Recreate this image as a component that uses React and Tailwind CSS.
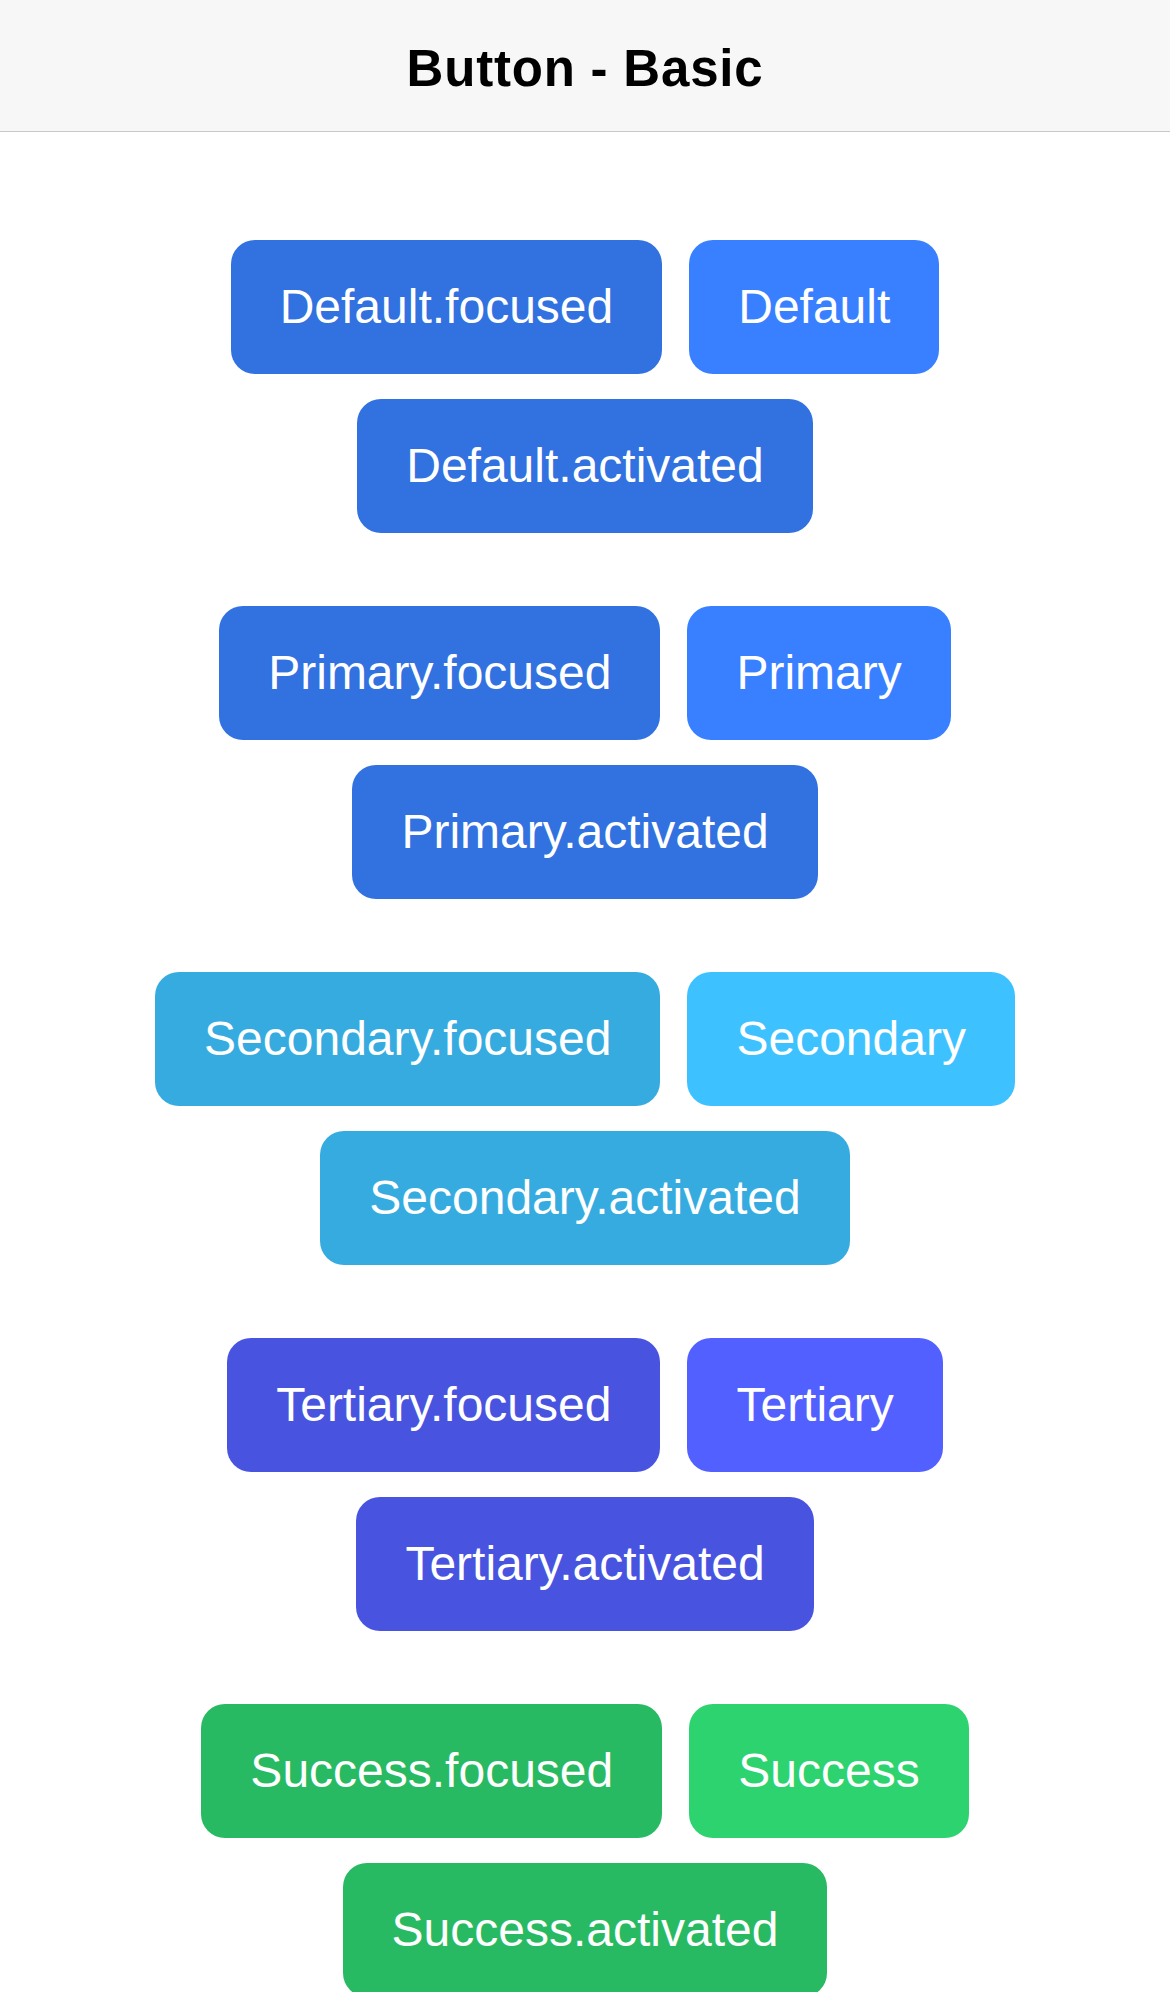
import React from "react";

const groups = [
  { name: "Default", shade: "bg-[#3171e0]", base: "bg-[#3880ff]" },
  { name: "Primary", shade: "bg-[#3171e0]", base: "bg-[#3880ff]" },
  { name: "Secondary", shade: "bg-[#36abe0]", base: "bg-[#3dc2ff]" },
  { name: "Tertiary", shade: "bg-[#4854e0]", base: "bg-[#5260ff]" },
  { name: "Success", shade: "bg-[#28ba62]", base: "bg-[#2dd36f]" },
];

function Btn({ label, color }) {
  return (
    <button
      className={`${color} h-[134px] px-[49px] rounded-[24px] flex items-center justify-center text-white text-[48px] leading-none whitespace-nowrap`}
      style={{ fontFamily: '"Liberation Sans", Arial, sans-serif' }}
    >
      {label}
    </button>
  );
}

export default function App() {
  return (
    <div className="w-[1170px] h-[1992px] bg-white overflow-hidden">
      <header className="h-[132px] bg-[#f7f7f7] border-b border-[#c8c7cc] flex items-center justify-center pt-[8px]">
        <h1
          className="text-[51px] font-bold text-black tracking-[0.8px]"
          style={{ fontFamily: '"Liberation Sans", Arial, sans-serif' }}
        >
          Button - Basic
        </h1>
      </header>
      <main className="pt-[108px] flex flex-col gap-[73px]">
        {groups.map((g) => (
          <div key={g.name} className="flex flex-col items-center gap-[25px]">
            <div className="flex justify-center gap-[27px]">
              <Btn label={`${g.name}.focused`} color={g.shade} />
              <Btn label={g.name} color={g.base} />
            </div>
            <div className="flex justify-center">
              <Btn label={`${g.name}.activated`} color={g.shade} />
            </div>
          </div>
        ))}
      </main>
    </div>
  );
}
